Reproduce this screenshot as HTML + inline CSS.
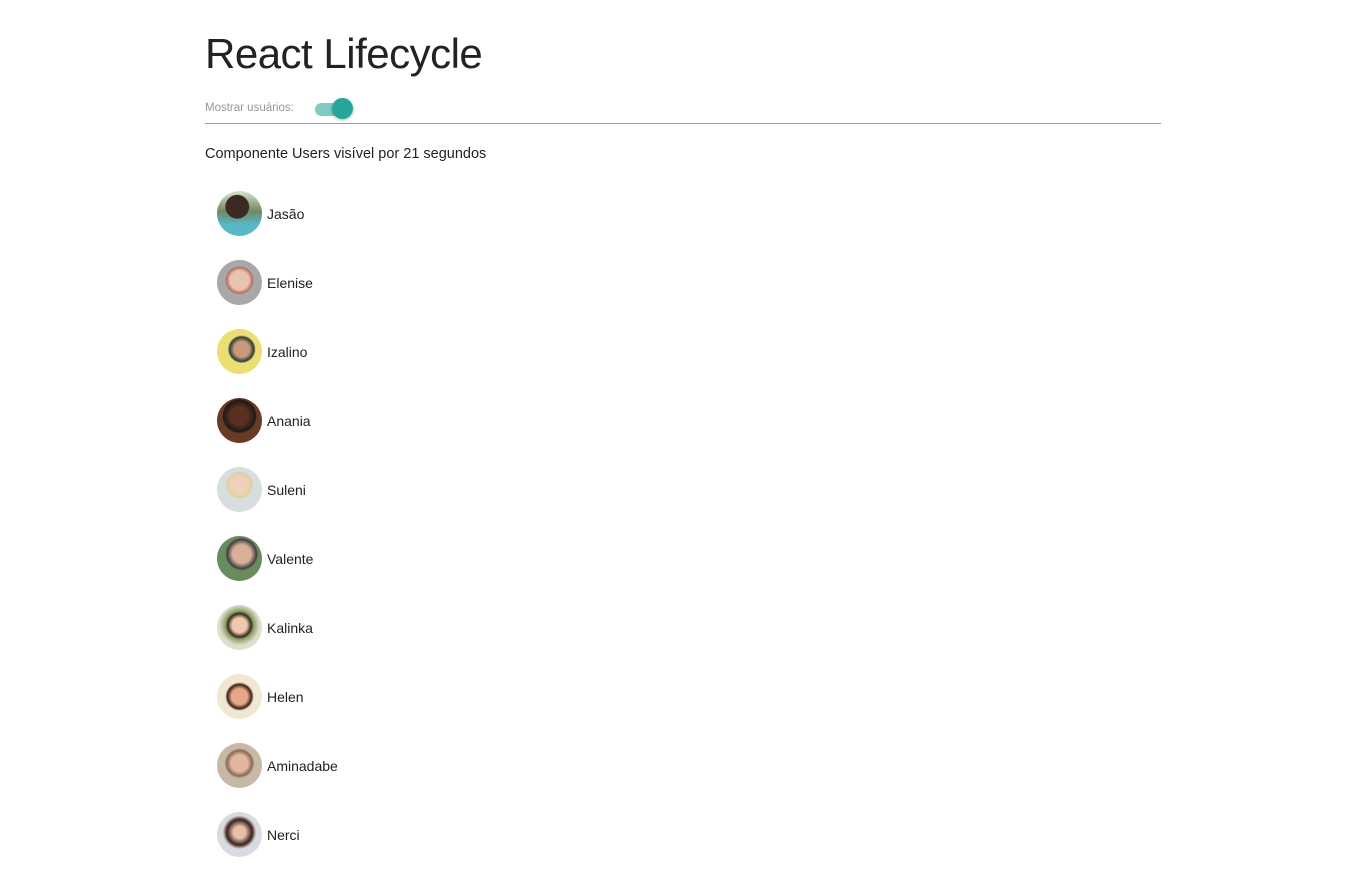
<!DOCTYPE html>
<html><head><meta charset="utf-8"><style>
body{margin:0;background:#fff;font-family:"Liberation Sans",sans-serif;color:#222;}
.wrap{position:absolute;left:205px;top:0;width:956px;}
h1{position:absolute;left:0;top:30px;margin:0;font-weight:normal;font-size:42px;letter-spacing:-0.5px;white-space:nowrap;}
.lbl{position:absolute;left:0;top:102px;font-size:11.5px;color:#999;}
.tog{position:absolute;left:110px;top:103px;width:36px;height:13px;border-radius:7px;background:#80cbc4;}
.knob{position:absolute;left:127px;top:98px;width:21px;height:21px;border-radius:50%;background:#26a69a;box-shadow:0 1px 3px rgba(0,0,0,.3);}
.hr{position:absolute;left:0;top:123px;width:956px;height:1px;background:#9e9e9e;}
.vis{position:absolute;left:0;top:146px;font-size:14.5px;}
.u{position:absolute;left:12px;width:300px;height:45px;}
.av{position:absolute;left:0;top:0;width:45px;height:45px;border-radius:50%;}
.n{position:absolute;left:50px;top:15px;font-size:14px;}
</style></head><body><div class="wrap">
<h1>React Lifecycle</h1>
<div class="lbl">Mostrar usuários:</div>
<div class="tog"></div><div class="knob"></div>
<div class="hr"></div>
<div class="vis">Componente Users visível por 21 segundos</div>
<div class="u" style="top:191px"><div class="av" style="background:radial-gradient(circle at 45% 35%,#3a2a22 30%,transparent 32%),linear-gradient(#d8e4d0 0,#6f8a60 45%,#56b8c8 75%)"></div><div class="n">Jasão</div></div>
<div class="u" style="top:260px"><div class="av" style="background:radial-gradient(circle at 50% 45%,#e8c4b0 28%,#b06a5a 40%,#a8a8a8 42%)"></div><div class="n">Elenise</div></div>
<div class="u" style="top:329px"><div class="av" style="background:radial-gradient(circle at 55% 45%,#c89a7a 22%,#2e3b3a 35%,#e8e070 40%)"></div><div class="n">Izalino</div></div>
<div class="u" style="top:398px"><div class="av" style="background:radial-gradient(circle at 50% 40%,#5a3020 25%,#1e1a18 45%,#6a3a22 50%)"></div><div class="n">Anania</div></div>
<div class="u" style="top:467px"><div class="av" style="background:radial-gradient(circle at 50% 40%,#f0d0b8 25%,#e0d0a0 35%,#d8dde0 40%)"></div><div class="n">Suleni</div></div>
<div class="u" style="top:536px"><div class="av" style="background:radial-gradient(circle at 55% 40%,#d8b098 25%,#404040 40%,#6a8a60 45%)"></div><div class="n">Valente</div></div>
<div class="u" style="top:605px"><div class="av" style="background:radial-gradient(circle at 50% 45%,#f0c8b0 22%,#3a2a20 35%,#8aa060 42%,#e0dcd0 60%)"></div><div class="n">Kalinka</div></div>
<div class="u" style="top:674px"><div class="av" style="background:radial-gradient(circle at 50% 50%,#e8a888 25%,#3a2018 38%,#f0e8d0 45%)"></div><div class="n">Helen</div></div>
<div class="u" style="top:743px"><div class="av" style="background:radial-gradient(circle at 50% 45%,#e0b8a0 25%,#8a6a50 38%,#c8b8a8 45%)"></div><div class="n">Aminadabe</div></div>
<div class="u" style="top:812px"><div class="av" style="background:radial-gradient(circle at 50% 45%,#e8c0a8 18%,#3a2018 38%,#d8dce0 50%)"></div><div class="n">Nerci</div></div>
</div></body></html>
